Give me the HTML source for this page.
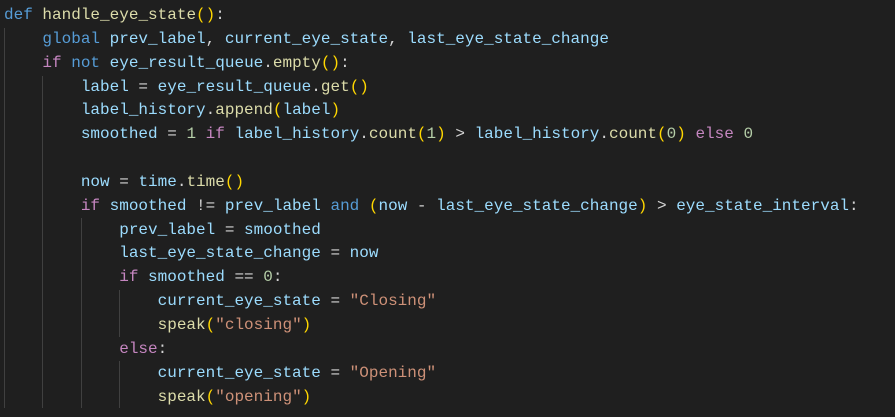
<!DOCTYPE html>
<html><head><meta charset="utf-8"><style>
html,body{margin:0;padding:0;background:#1f1f1f;width:895px;height:417px;overflow:hidden}
#c{position:absolute;left:4px;top:4px;font-family:"Liberation Mono",monospace;font-size:16px;line-height:23.85px;color:#d4d4d4;white-space:pre}
.g{position:absolute;width:1px;background:#404040}
.k{color:#569cd6}.p{color:#c586c0}.f{color:#dcdcaa}.v{color:#9cdcfe}.n{color:#b5cea8}.s{color:#ce9178}.b{color:#ffd700}
</style></head><body>
<div class="g" style="left:4px;top:28px;height:380px"></div>
<div class="g" style="left:42px;top:76px;height:332px"></div>
<div class="g" style="left:81px;top:218px;height:190px"></div>
<div class="g" style="left:119px;top:290px;height:47px"></div>
<div class="g" style="left:119px;top:361px;height:47px"></div>
<div id="c"><span class="k">def</span> <span class="f">handle_eye_state</span><span class="b">()</span>:
    <span class="k">global</span> <span class="v">prev_label</span>, <span class="v">current_eye_state</span>, <span class="v">last_eye_state_change</span>
    <span class="p">if</span> <span class="k">not</span> <span class="v">eye_result_queue</span>.<span class="f">empty</span><span class="b">()</span>:
        <span class="v">label</span> = <span class="v">eye_result_queue</span>.<span class="f">get</span><span class="b">()</span>
        <span class="v">label_history</span>.<span class="f">append</span><span class="b">(</span><span class="v">label</span><span class="b">)</span>
        <span class="v">smoothed</span> = <span class="n">1</span> <span class="p">if</span> <span class="v">label_history</span>.<span class="f">count</span><span class="b">(</span><span class="n">1</span><span class="b">)</span> &gt; <span class="v">label_history</span>.<span class="f">count</span><span class="b">(</span><span class="n">0</span><span class="b">)</span> <span class="p">else</span> <span class="n">0</span>

        <span class="v">now</span> = <span class="v">time</span>.<span class="f">time</span><span class="b">()</span>
        <span class="p">if</span> <span class="v">smoothed</span> != <span class="v">prev_label</span> <span class="k">and</span> <span class="b">(</span><span class="v">now</span> - <span class="v">last_eye_state_change</span><span class="b">)</span> &gt; <span class="v">eye_state_interval</span>:
            <span class="v">prev_label</span> = <span class="v">smoothed</span>
            <span class="v">last_eye_state_change</span> = <span class="v">now</span>
            <span class="p">if</span> <span class="v">smoothed</span> == <span class="n">0</span>:
                <span class="v">current_eye_state</span> = <span class="s">"Closing"</span>
                <span class="f">speak</span><span class="b">(</span><span class="s">"closing"</span><span class="b">)</span>
            <span class="p">else</span>:
                <span class="v">current_eye_state</span> = <span class="s">"Opening"</span>
                <span class="f">speak</span><span class="b">(</span><span class="s">"opening"</span><span class="b">)</span></div>
</body></html>
